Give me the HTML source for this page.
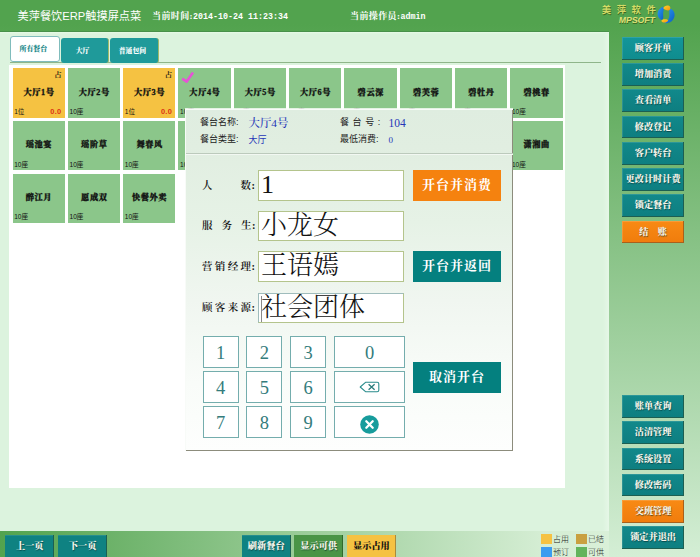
<!DOCTYPE html>
<html lang="zh-CN">
<head>
<meta charset="utf-8">
<title>美萍餐饮ERP触摸屏点菜</title>
<style>
*{box-sizing:border-box;margin:0;padding:0}
html,body{width:700px;height:557px;overflow:hidden}
body{position:relative;font-family:"Liberation Sans","Noto Sans CJK SC",sans-serif;
  background:linear-gradient(to bottom,rgb(82,163,78) 0px,rgb(82,163,78) 24px,rgb(212,238,213) 557px);
}
.abs{position:absolute}
.serif{font-family:"Liberation Serif","Noto Serif CJK SC",serif}
/* header */
#title{left:17.5px;top:8px;color:#fff;font-size:11.2px;line-height:16px;white-space:nowrap}
.hinfo{top:10px;color:#fff;font-size:9px;line-height:12px;font-weight:700;white-space:nowrap;letter-spacing:.4px}
/* content */
#content{left:0;top:31.5px;width:609px;height:499.6px;background:linear-gradient(to right,#dcf3de 0,#dcf3de 603px,#e6f7e7 609px)}
#tabline{left:10px;top:61.9px;width:591px;height:1.1px;background:#8fb58a}
.tab{top:37.7px;height:25px;width:48px;background:#1f9a9a;color:#fff;font-size:6.9px;font-weight:900;text-align:center;padding-right:3px;line-height:25px;border-radius:3px;white-space:nowrap;border-right:1px solid #9fb96a}
.tab.on{top:36.4px;height:26px;background:#fff;color:#1d8a8a;border:1px solid #80bcbc;line-height:24px}
#white{left:9px;top:64.5px;width:556.1px;height:423.9px;background:#fff}
.t{position:absolute;width:52.4px;height:49.3px;background:#8bc68a;color:#111;text-align:center}
.t.occ{background:#f5c242}
.t .n{position:absolute;left:0;right:0;top:18.3px;-webkit-text-stroke:0.3px #111;font-size:8.2px;line-height:12px;font-weight:900;white-space:nowrap;letter-spacing:0.6px;text-indent:0.6px}
.t .s{position:absolute;left:1.7px;bottom:1.8px;font-size:6.6px;line-height:8px;font-family:"Liberation Sans","Noto Sans CJK SC",sans-serif}
.t .m{position:absolute;right:3.4px;bottom:1.9px;font-size:7.4px;line-height:8px;color:#dc3214;font-weight:700;font-family:"Liberation Sans",sans-serif;letter-spacing:0.3px}
.t .z{position:absolute;right:3.3px;top:2.2px;font-size:7.4px;line-height:9px;font-weight:600}
/* side buttons */
.sb{position:absolute;left:622.1px;width:62px;height:22.8px;background:linear-gradient(#11898b,#0e7e80);color:#f4f4ea;font-size:9.2px;font-weight:900;text-align:center;line-height:22px;white-space:nowrap;box-shadow:inset -1px -1px 0 #1c5f52, inset 1px 1px 0 rgba(255,255,255,.12);text-shadow:0.5px 0.8px 0.8px rgba(0,40,40,.6)}
.sb.or{background:linear-gradient(#f88a14,#f07c0c);box-shadow:inset -1px -1px 0 #a8601c, inset 1px 1px 0 rgba(255,255,255,.15)}
/* bottom buttons */
.bb{position:absolute;top:534.6px;height:23px;background:#0f8282;color:#f4f4ea;font-size:9.2px;font-weight:900;text-align:center;line-height:23px;white-space:nowrap;box-shadow:inset -1px 0 0 #1c5f52, inset 0 1px 0 rgba(255,255,255,.1);text-shadow:0.5px 0.8px 0.8px rgba(0,40,40,.6)}
/* dialog */
#dlg{left:185.4px;top:108.5px;width:328px;height:342.4px;background:linear-gradient(to bottom,#dfede0 0%,#e1eee1 11%,#e6f2e6 33%,#f0f6f0 56%,#f9fcf9 80%,#fdfefd 100%);box-shadow:inset 1px 1px 0 #f8fbf8, inset -1px -1px 0 #8c8c7c, 0 -0.8px 0 #fbfdfb}
.lg{width:11.3px;height:10.7px}
.lt{font-size:8px;line-height:11px;color:#1a1a1a;white-space:nowrap;font-weight:300;margin-top:0.7px}
.dl{font-size:9px;line-height:11px;color:#222;white-space:nowrap}
.dv{font-size:9px;line-height:12px;font-weight:400;color:#2636b8;white-space:nowrap}
.fl{font-size:10.5px;line-height:12px;font-weight:600;color:#111;white-space:nowrap;letter-spacing:2.35px}
.in{width:145.9px;height:30.5px;background:#fff;border:1px solid #b4c48c;font-size:26px;line-height:27.5px;padding-left:1.6px;color:#111;white-space:nowrap;overflow:hidden;font-weight:300}
.db{width:88px;height:30.8px;background:#04807f;color:#fff;font-size:13px;font-weight:700;line-height:30px;text-align:center;letter-spacing:1px;white-space:nowrap}
.k{width:36px;height:31.5px;background:#fff;border:1px solid #74adad;color:#347c7c;font-size:18.5px;line-height:32px;text-align:center}
.kw{width:71px}
.mono{font-family:"Liberation Mono",monospace;font-size:8.33px;letter-spacing:0}
#bbar{left:0;top:531px;width:609px;height:26px;background:linear-gradient(to right,rgb(82,163,78) 0px,rgb(212,237,211) 540px,rgb(217,240,216) 609px)}
.lc{letter-spacing:0.5px}
</style>
</head>
<body>
<div id="title" class="abs">美萍餐饮ERP触摸屏点菜</div>
<div class="abs hinfo serif" style="left:152px">当前时间:<span class="mono">2014-10-24 11:23:34</span></div>
<div class="abs hinfo serif" style="left:350px">当前操作员:<span class="mono">admin</span></div>

<div class="abs" style="left:601.8px;top:4px;font-size:9.3px;line-height:13px;font-weight:700;color:#d3da66;letter-spacing:5.6px;white-space:nowrap;text-shadow:0.6px 0.8px 0 #3c6c22">美萍软件</div>
<div class="abs" style="left:619px;top:14.8px;font-size:8.6px;line-height:10px;font-weight:700;color:#dde078;white-space:nowrap;text-shadow:0.6px 0.8px 0 #3c6c22;letter-spacing:-0.1px;transform-origin:0 50%;transform:scaleX(1.02) skewX(-8deg)">MPSOFT</div>
<svg class="abs" style="left:657px;top:5.28px" width="18.1" height="18.85" viewBox="100 105 360 375">
<defs><linearGradient id="lgb" x1="0" y1="0" x2="1" y2="1"><stop offset="0" stop-color="#2a9cf4"/><stop offset="1" stop-color="#0c5cc0"/></linearGradient>
<linearGradient id="lgo" x1="0" y1="0" x2="1" y2="1"><stop offset="0" stop-color="#ffd428"/><stop offset="1" stop-color="#f59210"/></linearGradient></defs>
<path d="M225 140C150 160 108 225 112 295C116 350 150 395 200 405C235 380 225 330 222 290C220 245 235 195 240 170Z" fill="url(#lgb)"/>
<path d="M355 180C420 190 455 245 450 310C445 390 390 455 300 468C270 470 250 465 235 455C300 440 345 400 345 300C345 255 340 215 355 180Z" fill="url(#lgb)"/>
<path d="M225 165C245 125 300 105 345 125C370 140 372 175 355 200C335 220 300 215 270 200C250 190 230 185 225 165Z" fill="url(#lgo)"/>
<path d="M190 415C200 390 240 380 285 390C315 398 325 410 318 425C300 450 255 462 215 450C195 442 186 430 190 415Z" fill="url(#lgo)"/>
</svg>
<div id="content" class="abs"></div>
<div class="abs" style="left:0;top:30.5px;width:609px;height:1.2px;background:#48904a"></div>
<div class="abs" style="left:0;top:31.6px;width:609px;height:2px;background:linear-gradient(#e6fae6,#dcf3de)"></div>
<div id="tabline" class="abs"></div>
<div class="abs tab on serif" style="left:9.8px;width:50px">所有餐台</div>
<div class="abs tab serif" style="left:60.6px">大厅</div>
<div class="abs tab serif" style="left:110.2px;width:48.5px">普通包间</div>
<div id="white" class="abs"></div>
<div id="bbar" class="abs"></div>

<div class="t occ" style="left:12.5px;top:68.3px"><span class="n serif">大厅1号</span><span class="z serif">占</span><span class="s">1位</span><span class="m">0.0</span></div>
<div class="t" style="left:67.8px;top:68.3px"><span class="n serif">大厅2号</span><span class="s">10座</span></div>
<div class="t occ" style="left:123.1px;top:68.3px"><span class="n serif">大厅3号</span><span class="z serif">占</span><span class="s">1位</span><span class="m">0.0</span></div>
<div class="t" style="left:178.4px;top:68.3px"><svg style="position:absolute;left:1.9px;top:0.2px" width="16" height="15" viewBox="0 0 16 15"><path d="M2.2 10.6L6.6 13.6L13 4.6" fill="none" stroke="#e653d6" stroke-width="2.6" stroke-linejoin="miter"/></svg><span class="n serif">大厅4号</span><span class="s">10座</span></div>
<div class="t" style="left:233.7px;top:68.3px"><span class="n serif">大厅5号</span><span class="s">10座</span></div>
<div class="t" style="left:289.0px;top:68.3px"><span class="n serif">大厅6号</span><span class="s">10座</span></div>
<div class="t" style="left:344.3px;top:68.3px"><span class="n serif">碧云深</span><span class="s">10座</span></div>
<div class="t" style="left:399.6px;top:68.3px"><span class="n serif">碧芙蓉</span><span class="s">10座</span></div>
<div class="t" style="left:454.9px;top:68.3px"><span class="n serif">碧牡丹</span><span class="s">10座</span></div>
<div class="t" style="left:510.2px;top:68.3px"><span class="n serif">碧桃春</span><span class="s">10座</span></div>
<div class="t" style="left:12.5px;top:121.1px"><span class="n serif">瑶池宴</span><span class="s">10座</span></div>
<div class="t" style="left:67.8px;top:121.1px"><span class="n serif">瑶阶草</span><span class="s">10座</span></div>
<div class="t" style="left:123.1px;top:121.1px"><span class="n serif">舞春风</span><span class="s">10座</span></div>
<div class="t" style="left:178.4px;top:121.1px"><span class="s">10座</span></div>
<div class="t" style="left:233.7px;top:121.1px"></div>
<div class="t" style="left:289.0px;top:121.1px"></div>
<div class="t" style="left:344.3px;top:121.1px"></div>
<div class="t" style="left:399.6px;top:121.1px"></div>
<div class="t" style="left:454.9px;top:121.1px"></div>
<div class="t" style="left:510.2px;top:121.1px"><span class="n serif">潇湘曲</span><span class="s">10座</span></div>
<div class="t" style="left:12.5px;top:173.9px"><span class="n serif">醉江月</span><span class="s">10座</span></div>
<div class="t" style="left:67.8px;top:173.9px"><span class="n serif">愿成双</span><span class="s">10座</span></div>
<div class="t" style="left:123.1px;top:173.9px"><span class="n serif">快餐外卖</span><span class="s">10座</span></div>
<div class="sb serif" style="top:36.8px;background:linear-gradient(#12969a,#0f8c8e)">顾客开单</div>
<div class="sb serif" style="top:63.1px">增加消费</div>
<div class="sb serif" style="top:89.3px">查看清单</div>
<div class="sb serif" style="top:115.6px">修改登记</div>
<div class="sb serif" style="top:141.8px">客户转台</div>
<div class="sb serif" style="top:168.1px">更改计时计费</div>
<div class="sb serif" style="top:194.4px">锁定餐台</div>
<div class="sb or serif" style="top:220.6px">结　账</div>
<div class="sb serif" style="top:394.9px">账单查询</div>
<div class="sb serif" style="top:421.2px">沽清管理</div>
<div class="sb serif" style="top:447.5px">系统设置</div>
<div class="sb serif" style="top:473.7px">修改密码</div>
<div class="sb or serif" style="top:500.0px">交班管理</div>
<div class="sb serif" style="top:526.3px">锁定并退出</div>
<div class="bb serif" style="left:5.1px;width:49.3px">上一页</div>
<div class="bb serif" style="left:58px;width:49.2px">下一页</div>
<div class="bb serif" style="left:241.6px;width:49.3px">刷新餐台</div>
<div class="bb serif" style="left:294.3px;width:48.9px;background:#4a9446;box-shadow:inset -1px 0 0 #2f6a2c">显示可供</div>
<div class="bb serif" style="left:347px;width:48.9px;background:#f5c242;color:#111;text-shadow:none;box-shadow:inset -1px 0 0 #a88a3c">显示占用</div>
<div class="abs lg" style="left:541.2px;top:533.8px;background:#f5c242"></div><div class="abs lt" style="left:553px;top:533px">占用</div>
<div class="abs lg" style="left:575.6px;top:533.8px;background:#c9a040"></div><div class="abs lt" style="left:588px;top:533px">已结</div>
<div class="abs lg" style="left:541.2px;top:546.8px;background:#3c9cf0"></div><div class="abs lt" style="left:553px;top:546px">预订</div>
<div class="abs lg" style="left:575.6px;top:546.8px;background:#62b45c"></div><div class="abs lt" style="left:588px;top:546px">可供</div>
<div id="dlg" class="abs">
<div class="abs dl" style="left:14.6px;top:8.5px">餐台名称:</div><div class="abs dv serif" style="left:63.1px;top:7.0px;font-size:11.4px;line-height:14px;font-weight:500">大厅4号</div>
<div class="abs dl" style="left:14.6px;top:25.5px">餐台类型:</div><div class="abs dv" style="left:63.1px;top:25.0px">大厅</div>
<div class="abs dl" style="left:154.6px;top:8.5px;letter-spacing:3.6px">餐台号:</div><div class="abs dv serif" style="left:203.1px;top:7.0px;font-size:11.5px;line-height:14px">104</div>
<div class="abs dl" style="left:154.6px;top:25.5px">最低消费:</div><div class="abs dv serif" style="left:203.1px;top:25.0px">0</div>
<div class="abs" style="left:0.5px;top:44.5px;width:327px;height:1px;background:#bccabc"></div><div class="abs" style="left:0.5px;top:45.5px;width:327px;height:1px;background:#f2f8f2"></div>
<div class="abs fl serif" style="left:16.6px;top:71.1px;">人<span style="display:inline-block;width:25.6px"></span><span class="lc">数</span>:</div>
<div class="abs in serif" style="left:73.0px;top:61.6px">1</div>
<div class="abs fl serif" style="left:16.6px;top:111.5px;"><span style="letter-spacing:8.95px">服务</span><span class="lc">生</span>:</div>
<div class="abs in serif" style="left:73.0px;top:102.0px">小龙女</div>
<div class="abs fl serif" style="left:16.6px;top:152.3px;">营销经<span class="lc">理</span>:</div>
<div class="abs in serif" style="left:73.0px;top:142.8px">王语嫣</div>
<div class="abs fl serif" style="left:16.6px;top:193.6px;">顾客来<span class="lc">源</span>:</div>
<div class="abs in serif" style="left:73.0px;top:184.1px;border-color:#9fbcbc #b4c48c #b4c48c #9fbcbc"><span style="position:absolute;left:1.2px;top:2px;width:1.3px;height:26px;background:#8a8a8a"></span>社会团体</div>
<div class="abs db serif" style="left:227.6px;top:61.3px;background:#f5820f">开台并消费</div>
<div class="abs db serif" style="left:227.6px;top:142.9px">开台并返回</div>
<div class="abs db serif" style="left:227.6px;top:253.7px">取消开台</div>
<div class="abs k serif" style="left:17.3px;top:227.9px">1</div>
<div class="abs k serif" style="left:61.1px;top:227.9px">2</div>
<div class="abs k serif" style="left:104.8px;top:227.9px">3</div>
<div class="abs k serif" style="left:17.3px;top:262.6px">4</div>
<div class="abs k serif" style="left:61.1px;top:262.6px">5</div>
<div class="abs k serif" style="left:104.8px;top:262.6px">6</div>
<div class="abs k serif" style="left:17.3px;top:297.9px">7</div>
<div class="abs k serif" style="left:61.1px;top:297.9px">8</div>
<div class="abs k serif" style="left:104.8px;top:297.9px">9</div>
<div class="abs k kw serif" style="left:148.7px;top:227.9px">0</div>
<div class="abs k kw" style="left:148.7px;top:262.6px"><svg width="21" height="12" viewBox="0 0 21 12" style="position:absolute;left:23.8px;top:8.9px"><path d="M6.8 1.2H18.2Q19.8 1.2 19.8 2.8V9.2Q19.8 10.8 18.2 10.8H6.8L1.2 6Z" fill="none" stroke="#2a8c8c" stroke-width="1.1" stroke-linejoin="round"/><path d="M9.6 3.2l6 5.6M15.6 3.2l-6 5.6" stroke="#2a7c7c" stroke-width="1.3"/></svg></div>
<div class="abs k kw" style="left:148.7px;top:297.9px"><svg width="19" height="19" viewBox="0 0 19 19" style="position:absolute;left:25.2px;top:7.4px"><circle cx="9.5" cy="9.5" r="9.3" fill="#179c9c"/><path d="M6.3 6.3l6.4 6.4M12.7 6.3l-6.4 6.4" stroke="#fff" stroke-width="2.3" stroke-linecap="round"/></svg></div>
</div>
</body>
</html>
